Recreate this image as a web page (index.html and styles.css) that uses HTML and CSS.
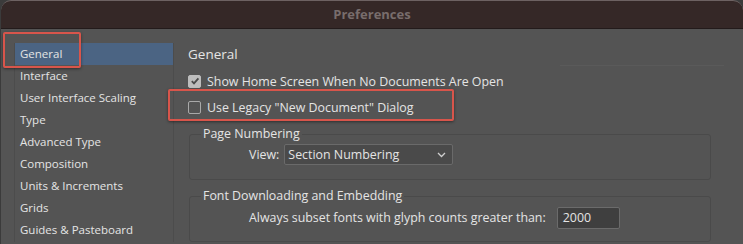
FILE: index.html
```html
<!DOCTYPE html>
<html lang="en">
<head>
    <meta charset="UTF-8">
    <meta name="viewport" content="width=device-width, initial-scale=1.0">
    <title>Preferences</title>
    <link rel="stylesheet" href="styles.css">
</head>
<body>
    <div class="window">
        <div class="titlebar">Preferences</div>

        <div class="content">
            <ul class="sidebar">
                <li class="selected">General</li>
                <li>Interface</li>
                <li>User Interface Scaling</li>
                <li>Type</li>
                <li>Advanced Type</li>
                <li>Composition</li>
                <li>Units &amp; Increments</li>
                <li>Grids</li>
                <li>Guides &amp; Pasteboard</li>
            </ul>

            <div class="main">
                <div class="heading-row">
                    <h2>General</h2>
                    <span class="rule"></span>
                </div>

                <label class="check-row">
                    <span class="checkbox checked">
                        <svg width="10" height="10" viewBox="0 0 10 10"><path d="M1.8 5.2 L4 7.4 L8.4 2.4" fill="none" stroke="#4a4a4a" stroke-width="1.8"/></svg>
                    </span>
                    Show Home Screen When No Documents Are Open
                </label>
                <label class="check-row">
                    <span class="checkbox"></span>
                    Use Legacy "New Document" Dialog
                </label>

                <fieldset class="group">
                    <legend>Page Numbering</legend>
                    <div class="field">
                        <span>View:</span>
                        <div class="select">
                            Section Numbering
                            <svg width="9" height="6" viewBox="0 0 9 6"><path d="M1 1 L4.5 4.5 L8 1" fill="none" stroke="#cfcfcf" stroke-width="1.3"/></svg>
                        </div>
                    </div>
                </fieldset>

                <fieldset class="group">
                    <legend>Font Downloading and Embedding</legend>
                    <div class="field">
                        <span>Always subset fonts with glyph counts greater than:</span>
                        <div class="text-input">2000</div>
                    </div>
                </fieldset>
            </div>
        </div>

        <!-- annotation boxes drawn over the dialog -->
        <div class="callout callout-general"></div>
        <div class="callout callout-legacy"></div>
    </div>
</body>
</html>
```

FILE: styles.css
```css
body {
    margin: 0;
    background-color: #3b3b3b;
    font-family: "Open Sans", "Liberation Sans", sans-serif;
    color: #e4e4e4;
}
.window {
    position: relative;
    height: 244px;
    margin-left: 1px;
    background-color: #545454;
    border-radius: 10px 10px 0 0;
    overflow: hidden;
}
.titlebar {
    height: 27px;
    line-height: 27px;
    text-align: center;
    background-color: #352827;
    border-top: 1px solid #6d6262;
    border-bottom: 1px solid #231b1b;
    border-radius: 10px 10px 0 0;
    color: #786d6c;
    font-weight: 700;
    font-size: 13px;
}
.content {
    display: flex;
    padding-top: 14px;
}
.sidebar {
    list-style: none;
    margin: 0 0 0 13px;
    padding: 0;
    width: 158px;
    border-left: 1px solid #4c4c4c;
    border-right: 1px solid #4c4c4c;
    font-size: 11.5px;
}
.sidebar li {
    height: 22px;
    line-height: 22px;
    padding-left: 5px;
}
.sidebar .selected {
    background-color: #4b6483;
}
.main {
    flex: 1;
    padding-left: 14px;
    padding-right: 32px;
}
.heading-row {
    display: flex;
    align-items: center;
    height: 22px;
}
.heading-row h2 {
    margin: 0;
    font-size: 13.5px;
    font-weight: 400;
}
.rule {
    flex: 1;
    height: 1px;
    margin: 22px -13px 0 322px;
    background-color: #5a5a5a;
}
.check-row {
    display: flex;
    align-items: center;
    gap: 6px;
    height: 26px;
    font-size: 12.4px;
}
.check-row:first-of-type {
    margin-top: 3px;
}
.checkbox {
    display: flex;
    align-items: center;
    justify-content: center;
    width: 11px;
    height: 11px;
    border: 1px solid #a9a9a9;
    border-radius: 2px;
}
.checkbox.checked {
    background-color: #bdbdbd;
    border-color: #bdbdbd;
}
.group {
    box-sizing: border-box;
    height: 53px;
    margin: 7px 0 0 1px;
    padding: 3px 0 0 0;
    border: 1px solid #4a4a4a;
    border-radius: 3px;
}
.group + .group {
    margin-top: 9px;
    padding-top: 4px;
}
.group legend {
    margin-left: 11px;
    padding: 0 2px;
    font-size: 12.4px;
    line-height: 14px;
}
.field {
    display: flex;
    align-items: center;
    gap: 4px;
    height: 21px;
    padding-left: 59px;
    font-size: 12.4px;
}
.select {
    display: flex;
    align-items: center;
    justify-content: space-between;
    width: 158px;
    height: 19px;
    padding: 0 6px 0 3px;
    margin-left: 1px;
    background-color: #4a4a4a;
    border: 1px solid #6a6a6a;
    border-radius: 2px;
}
.text-input {
    width: 56px;
    height: 20px;
    line-height: 20px;
    padding-left: 5px;
    margin-left: 7px;
    background-color: #3f3f3f;
    border: 1px solid #6b6b6b;
    border-radius: 2px;
}
.callout {
    position: absolute;
    border: 2px solid #d8554b;
    border-radius: 2px;
    box-shadow: 0 1px 3px rgba(0, 0, 0, 0.45);
}
.callout-general {
    left: 2px;
    top: 32px;
    width: 74px;
    height: 32px;
}
.callout-legacy {
    left: 167px;
    top: 89px;
    width: 282px;
    height: 28px;
}
```
